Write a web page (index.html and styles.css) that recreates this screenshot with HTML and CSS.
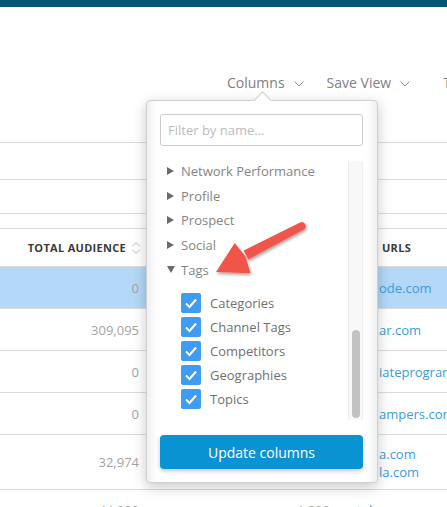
FILE: index.html
```html
<!DOCTYPE html>
<html>
<head>
<meta charset="utf-8">
<link rel="stylesheet" href="styles.css">
</head>
<body>
<div class="page">
  <div class="topbar"></div>
  <div class="toolbar">
    <div class="tool">Columns <svg class="chev" viewBox="0 0 10 6" width="10" height="6"><polyline points="0.5,0.5 5,5 9.5,0.5" fill="none" stroke="#8a8a8a" stroke-width="1"/></svg></div>
    <div class="tool">Save View <svg class="chev" viewBox="0 0 10 6" width="10" height="6"><polyline points="0.5,0.5 5,5 9.5,0.5" fill="none" stroke="#8a8a8a" stroke-width="1"/></svg></div>
    <div class="tool">Tools</div>
  </div>
  <div class="band band-a"></div>
  <div class="band band-b"></div>
  <div class="band band-c"></div>
  <div class="trow head">
    <div class="cell num">TOTAL AUDIENCE <svg class="sort" viewBox="0 0 8 14" width="8" height="14"><polyline points="0.5,5 4,1.5 7.5,5" fill="none" stroke="#bbb" stroke-width="1"/><polyline points="0.5,9 4,12.5 7.5,9" fill="none" stroke="#bbb" stroke-width="1"/></svg></div>
    <div class="cell mid"></div>
    <div class="cell url clip">URLS</div>
  </div>
  <div class="trow sel">
    <div class="cell num">0</div><div class="cell mid"></div><div class="cell url clip"><a>ode.com</a></div>
  </div>
  <div class="trow">
    <div class="cell num">309,095</div><div class="cell mid"></div><div class="cell url clip"><a>ar.com</a></div>
  </div>
  <div class="trow">
    <div class="cell num">0</div><div class="cell mid"></div><div class="cell url clip"><a>iateprogram</a></div>
  </div>
  <div class="trow">
    <div class="cell num">0</div><div class="cell mid"></div><div class="cell url clip"><a>ampers.com</a></div>
  </div>
  <div class="trow tall">
    <div class="cell num">32,974</div><div class="cell mid"></div><div class="cell url clip stack"><a>a.com</a><a>la.com</a></div>
  </div>
  <div class="trow last">
    <div class="cell num">44,000</div><div class="cell mid">1,200</div><div class="cell url"><a>youtube.com</a> <a>..</a></div>
  </div>

  <div class="popover">
    <div class="caret"></div>
    <input class="filter" type="text" placeholder="Filter by name...">
    <div class="listbox">
      <div class="list">
        <div class="group"><span class="tri"></span>Network Performance</div>
        <div class="group"><span class="tri"></span>Profile</div>
        <div class="group"><span class="tri"></span>Prospect</div>
        <div class="group"><span class="tri"></span>Social</div>
        <div class="group"><span class="tri open"></span>Tags</div>
        <div class="children">
          <div class="opt"><span class="cb"><svg viewBox="0 0 20 20" width="20" height="20"><polyline points="5,10.5 8.5,14 15,6.5" fill="none" stroke="#fff" stroke-width="2"/></svg></span>Categories</div>
          <div class="opt"><span class="cb"><svg viewBox="0 0 20 20" width="20" height="20"><polyline points="5,10.5 8.5,14 15,6.5" fill="none" stroke="#fff" stroke-width="2"/></svg></span>Channel Tags</div>
          <div class="opt"><span class="cb"><svg viewBox="0 0 20 20" width="20" height="20"><polyline points="5,10.5 8.5,14 15,6.5" fill="none" stroke="#fff" stroke-width="2"/></svg></span>Competitors</div>
          <div class="opt"><span class="cb"><svg viewBox="0 0 20 20" width="20" height="20"><polyline points="5,10.5 8.5,14 15,6.5" fill="none" stroke="#fff" stroke-width="2"/></svg></span>Geographies</div>
          <div class="opt"><span class="cb"><svg viewBox="0 0 20 20" width="20" height="20"><polyline points="5,10.5 8.5,14 15,6.5" fill="none" stroke="#fff" stroke-width="2"/></svg></span>Topics</div>
        </div>
      </div>
      <div class="track"><div class="thumb"></div></div>
    </div>
    <button class="update">Update columns</button>
  </div>

  <svg class="arrow" viewBox="0 0 447 507" width="447" height="507">
    <defs>
      <filter id="sh" x="-20%" y="-20%" width="140%" height="140%">
        <feDropShadow dx="1" dy="2" stdDeviation="1.5" flood-color="#000" flood-opacity="0.35"/>
      </filter>
    </defs>
    <g filter="url(#sh)" fill="#f0554a">
      <path d="M300.1,222.5 L243.7,250.6 L248.3,259.4 L303.9,229.5 A4,4 0 0 0 300.1,222.5 Z"/>
      <polygon points="216,272 234.7,243 245.5,256.6 250.5,273.2"/>
    </g>
  </svg>
</div>
</body>
</html>
```

FILE: styles.css
```css
html, body {
  margin: 0;
  padding: 0;
  background: #fff;
}
body {
  font-family: "Open Sans", "Noto Sans", sans-serif;
  width: 447px;
  height: 507px;
  overflow: hidden;
}
.page {
  position: relative;
  width: 447px;
  height: 507px;
  overflow: hidden;
}
.topbar {
  height: 7px;
  background: #045577;
}
.toolbar {
  height: 136px;
  box-sizing: border-box;
  border-bottom: 1px solid #dcdcdc;
  display: flex;
  align-items: flex-start;
  padding: 66px 0 0 227px;
  gap: 23px;
  white-space: nowrap;
}
.tool {
  font-size: 14px;
  line-height: 20px;
  color: #808080;
  display: flex;
  align-items: center;
  flex-shrink: 0;
}
.tool:last-child {
  margin-left: 10px;
}
.chev {
  margin-left: 9px;
  margin-top: 1px;
}
.band {
  border-bottom: 1px solid #dcdcdc;
}
.band-a { height: 36px; }
.band-b { height: 33px; }
.band-c { height: 14px; }

.trow {
  display: grid;
  grid-template-columns: 146px 232px 1fr;
  height: 41px;
  border-bottom: 1px solid #dcdcdc;
  font-size: 13px;
  color: #a3a3a3;
}
.trow.head {
  height: 37px;
  font-size: 11px;
  font-weight: 700;
  color: #3a3a3a;
  letter-spacing: 0.3px;
}
.trow.sel {
  background: #b4d8f7;
}
.trow.tall {
  height: 54px;
}
.trow.last {
  height: 40px;
  border-bottom: none;
  grid-template-columns: 146px 187px 1fr;
}
.cell {
  display: flex;
  align-items: center;
  white-space: nowrap;
  overflow: hidden;
}
.num {
  justify-content: flex-end;
  padding-right: 7px;
}
.head .num {
  padding-right: 6px;
}
.sort {
  margin-left: 6px;
}
.url {
  padding-left: 1px;
  color: #3a9ddb;
}
.head .url {
  padding-left: 4px;
  color: #3a3a3a;
}
.url a {
  color: #3a9ddb;
}
.stack {
  flex-direction: column;
  align-items: flex-start;
  justify-content: center;
  line-height: 18px;
  padding-top: 2px;
}
.last .cell {
  align-items: flex-start;
  padding-top: 11px;
}
.last .mid {
  justify-content: flex-end;
  padding-right: 3px;
}

.popover {
  position: absolute;
  left: 146px;
  top: 100px;
  width: 232px;
  height: 383px;
  box-sizing: border-box;
  background: #fff;
  border: 1px solid #cfcfcf;
  border-radius: 4px;
  padding: 13px 14px 13px 13px;
  display: flex;
  flex-direction: column;
  box-shadow: inset 14px 0 12px -12px rgba(0,0,0,0.10), inset -14px 0 12px -12px rgba(0,0,0,0.10), 0 4px 14px rgba(0,0,0,0.22);
}
.caret {
  position: absolute;
  top: -7px;
  left: 109px;
  width: 12px;
  height: 12px;
  background: #fff;
  border-left: 1px solid #cfcfcf;
  border-top: 1px solid #cfcfcf;
  transform: rotate(45deg);
}
.filter {
  display: block;
  box-sizing: border-box;
  width: 203px;
  height: 32px;
  margin: 0;
  border: 1px solid #cccccc;
  border-radius: 3px;
  padding: 0 7px;
  font-family: "Open Sans", "Noto Sans", sans-serif;
  font-size: 13px;
  color: #555;
  outline: none;
}
.filter::placeholder {
  color: #bbbbbb;
}
.listbox {
  margin-top: 15px;
  height: 259px;
  display: flex;
  overflow: hidden;
}
.list {
  flex: 1;
  margin-top: -2.5px;
  font-size: 13px;
}
.group {
  height: 24.75px;
  display: flex;
  align-items: center;
  padding-left: 7px;
  color: #858585;
}
.tri {
  width: 0;
  height: 0;
  border-left: 7px solid #6a6a6a;
  border-top: 4.5px solid transparent;
  border-bottom: 4.5px solid transparent;
  margin-right: 7px;
}
.tri.open {
  border-left: 4px solid transparent;
  border-right: 4px solid transparent;
  border-top: 7px solid #6a6a6a;
  border-bottom: none;
  margin-right: 6px;
}
.children {
  padding-top: 9px;
  padding-left: 21px;
}
.opt {
  height: 24px;
  display: flex;
  align-items: center;
  color: #707070;
}
.cb {
  width: 20px;
  height: 20px;
  border-radius: 2px;
  background: #409cf2;
  margin-right: 9px;
  display: flex;
}
.track {
  width: 15px;
  box-sizing: border-box;
  background: #f8f8f8;
  border-left: 1px solid #ececec;
  border-right: 1px solid #f0f0f0;
  position: relative;
}
.thumb {
  position: absolute;
  left: 3px;
  width: 8px;
  bottom: 2px;
  height: 88px;
  border-radius: 4px;
  background: #c2c2c2;
}
.update {
  margin-top: 15px;
  height: 34px;
  width: 203px;
  border: none;
  border-radius: 4px;
  background: #0a93d2;
  color: #fff;
  font-family: "Open Sans", "Noto Sans", sans-serif;
  font-size: 14px;
  padding: 0;
  box-shadow: 0 2px 4px rgba(0,0,0,0.22);
}
.arrow {
  position: absolute;
  left: 0;
  top: 0;
  pointer-events: none;
}
```
